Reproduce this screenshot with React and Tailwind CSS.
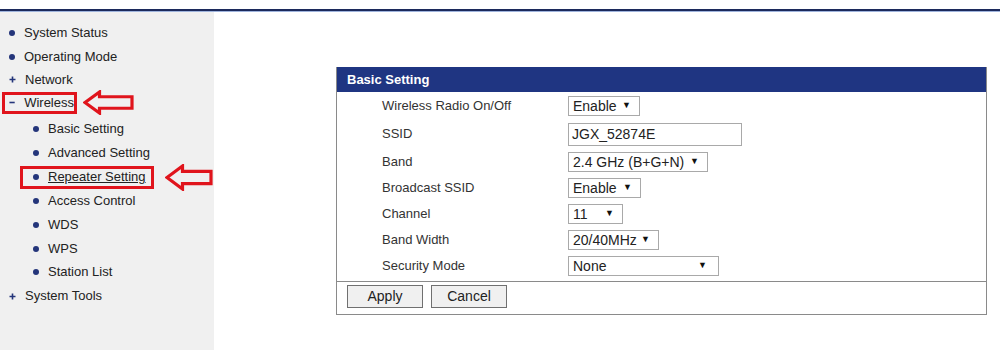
const font = { fontFamily: '"Liberation Sans", Arial, sans-serif' }

const Dot = () => <span className="w-[6px] h-[6px] rounded-full bg-[#24357a] inline-block" />

const Plus = () => (
  <svg width="7" height="7" viewBox="0 0 7 7" className="block">
    <path d="M3.5 0.5v6M0.5 3.5h6" stroke="#24357a" strokeWidth="1.6" />
  </svg>
)

const Minus = () => (
  <svg width="7" height="7" viewBox="0 0 7 7" className="block">
    <path d="M0.5 3.5h6" stroke="#24357a" strokeWidth="1.8" />
  </svg>
)

const Arrow = ({ className, w, h }) => (
  <svg width={w} height={h} viewBox={`0 0 ${w} ${h}`} className={className}>
    <polygon
      points={`2,${h / 2} ${h / 2 + 4},2 ${h / 2 + 4},${h * 0.27} ${w - 2},${h * 0.27} ${w - 2},${h * 0.73} ${h / 2 + 4},${h * 0.73} ${h / 2 + 4},${h - 2}`}
      fill="none"
      stroke="#e0141c"
      strokeWidth="3.2"
      strokeLinejoin="miter"
    />
  </svg>
)

const Select = ({ value, width, className = "" }) => (
  <div
    className={`h-[20px] border border-[#a9a9a9] bg-white flex items-center justify-between pl-[4px] pr-[8px] text-[14px] text-[#222] ${className}`}
    style={{ width }}
  >
    <span>{value}</span>
    <span className="text-[9px] text-[#111]">▼</span>
  </div>
)

const rows = [
  { label: "Wireless Radio On/Off", h: "h-[26px]", ctrl: <Select value="Enable" width={72} /> },
  {
    label: "SSID",
    h: "h-[30px]",
    ctrl: (
      <div className="w-[174px] h-[23px] border border-[#a9a9a9] bg-white flex items-center pl-[3px] text-[14px] text-[#222]">
        JGX_52874E
      </div>
    ),
  },
  { label: "Band", h: "h-[26px]", ctrl: <Select value="2.4 GHz (B+G+N)" width={140} /> },
  { label: "Broadcast SSID", h: "h-[26px]", ctrl: <Select value="Enable" width={73} /> },
  { label: "Channel", h: "h-[26px]", ctrl: <Select value="11" width={55} /> },
  { label: "Band Width", h: "h-[26px]", ctrl: <Select value="20/40MHz" width={91} /> },
  { label: "Security Mode", h: "h-[26px]", ctrl: <Select value="None" width={151} className="pr-[11px]" /> },
]

export default function App() {
  return (
    <div className="w-[1000px] h-[350px] bg-white flex flex-col overflow-hidden" style={font}>
      <div className="h-[9px] shrink-0" />
      <div className="h-[3px] shrink-0 bg-[#1c2a5c] border-b border-[#9fb4dd]" />
      <div className="flex flex-1">
        <div className="w-[214px] bg-[#f0f0f0] pt-[9px] relative text-[13px] text-[#222]">
          <div className="h-[24px] flex items-center pl-[9px] gap-[9px]"><Dot />System Status</div>
          <div className="h-[23px] flex items-center pl-[9px] gap-[9px]"><Dot />Operating Mode</div>
          <div className="h-[23px] flex items-center pl-[9px] gap-[9px]"><Plus />Network</div>
          <div className="h-[26px] flex items-center">
            <div className="ml-[2px] w-[75px] h-[22px] border-[3px] border-[#e0141c] flex items-center pl-[4px] gap-[9px] mb-[3px]">
              <Minus />Wireless
            </div>
          </div>
          <div className="h-[24px] flex items-center pl-[33px] gap-[9px]"><Dot />Basic Setting</div>
          <div className="h-[24px] flex items-center pl-[33px] gap-[9px]"><Dot />Advanced Setting</div>
          <div className="h-[24px] flex items-center">
            <div className="ml-[20px] w-[134px] h-[23px] border-[3px] border-[#e0141c] flex items-center pl-[10px] gap-[9px]">
              <Dot /><span className="underline">Repeater Setting</span>
            </div>
          </div>
          <div className="h-[24px] flex items-center pl-[33px] gap-[9px]"><Dot />Access Control</div>
          <div className="h-[24px] flex items-center pl-[33px] gap-[9px]"><Dot />WDS</div>
          <div className="h-[23px] flex items-center pl-[33px] gap-[9px]"><Dot />WPS</div>
          <div className="h-[23px] flex items-center pl-[33px] gap-[9px]"><Dot />Station List</div>
          <div className="h-[26px] flex items-center pl-[9px] gap-[9px]"><Plus />System Tools</div>

          <Arrow className="absolute left-[83px] top-[78px]" w={51} h={25} />
          <Arrow className="absolute left-[165px] top-[152px]" w={48} h={27} />
        </div>

        <div className="flex-1 pl-[122px] pt-[55px]">
          <div className="w-[651px] border border-[#8a8a8a] border-t-0">
            <div className="h-[25px] bg-[#1f3582] flex items-center pl-[10px] text-[13px] font-bold text-white">
              Basic Setting
            </div>
            <div className="pt-[1px] pb-[2px]">
              {rows.map((r) => (
                <div key={r.label} className={`${r.h} flex items-center`}>
                  <div className="w-[231px] pl-[45px] text-[13px] text-[#333]">{r.label}</div>
                  {r.ctrl}
                </div>
              ))}
            </div>
            <div className="border-t border-[#8a8a8a] pt-[3px] pb-[6px] pl-[10px] flex gap-[8px]">
              <button className="w-[76px] h-[23px] border border-[#707070] bg-[#f0f0f0] text-[14px] text-[#222]">
                Apply
              </button>
              <button className="w-[76px] h-[23px] border border-[#707070] bg-[#f0f0f0] text-[14px] text-[#222]">
                Cancel
              </button>
            </div>
          </div>
        </div>
      </div>
    </div>
  )
}
